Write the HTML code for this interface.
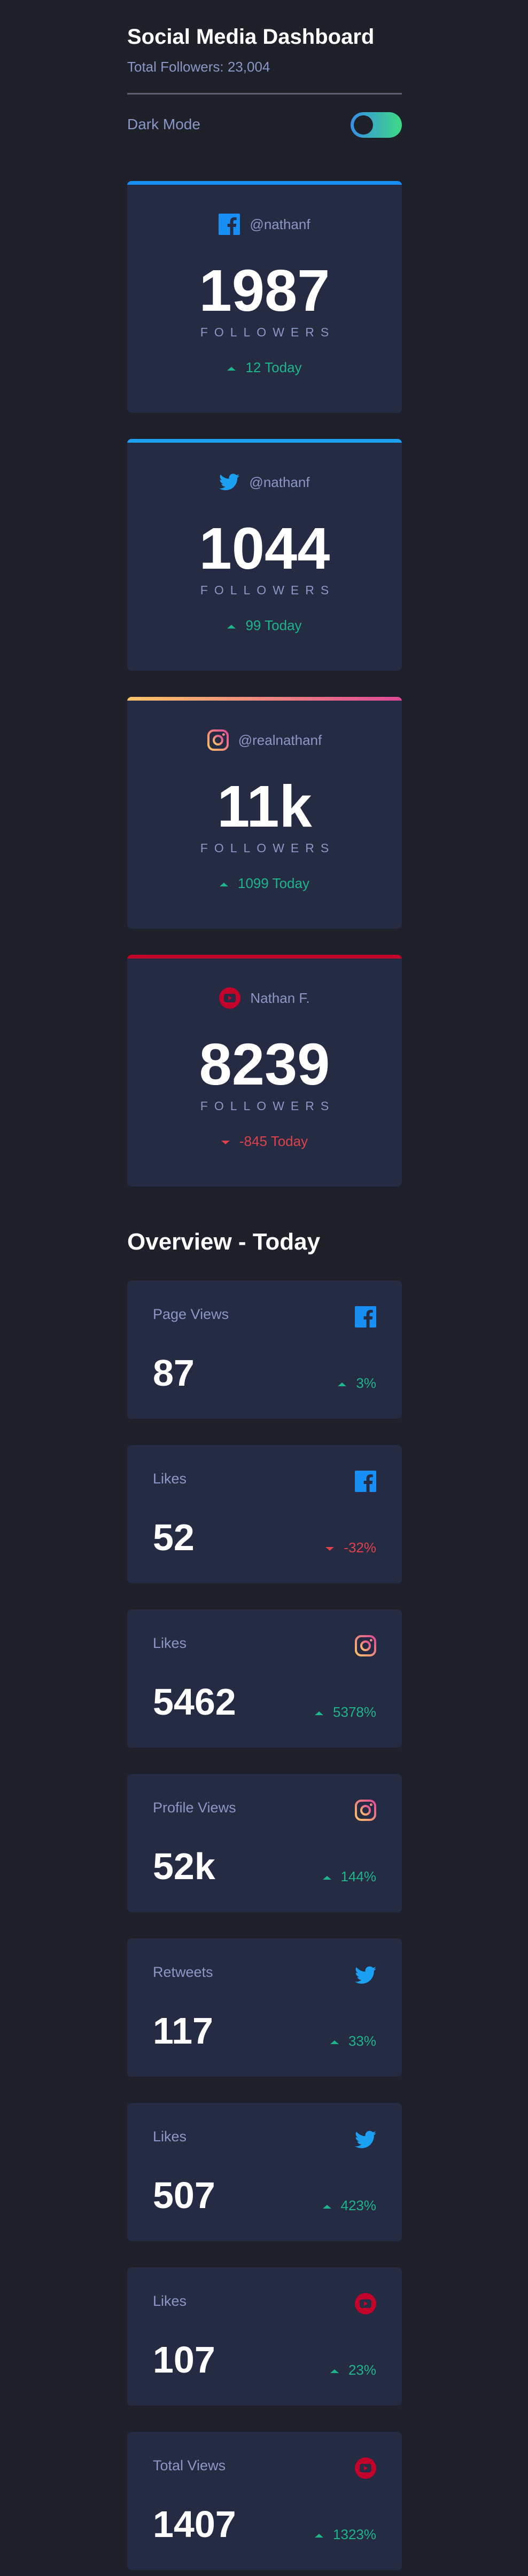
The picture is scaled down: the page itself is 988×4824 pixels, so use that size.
<!DOCTYPE html>
<html><head><meta charset="utf-8"><style>
*{margin:0;padding:0;box-sizing:border-box}
body{width:988px;height:4824px;background:#1e202a;font-family:"Liberation Sans",Arial,sans-serif;position:relative;overflow:hidden}
.a{position:absolute;line-height:1;white-space:nowrap}
.card{position:absolute;left:238px;width:514px;height:434px;background:#252b42;border-radius:8px;overflow:hidden}
.bar{position:absolute;left:0;top:0;width:100%;height:7px}
.c{position:absolute;left:0;width:100%;text-align:center;line-height:1;white-space:nowrap}
.handle{top:69px;font-size:26px;color:#8b97c6;display:flex;justify-content:center;align-items:center;gap:18px;height:24px}
.handle svg{flex:none}
.num{top:151px;font-size:110px;font-weight:bold;color:#fff}
.fol{top:272px;font-size:23px;color:#8b97c6;letter-spacing:12px;padding-left:12px}
.today{top:336px;font-size:26px}
.up{color:#1eb589}.dn{color:#dc414c}
.tri{display:inline-block;width:0;height:0;border-left:8px solid transparent;border-right:8px solid transparent;vertical-align:middle;margin-right:18px}
.tu{border-bottom:7px solid #1eb589}.td{border-top:7px solid #dc414c}
.ov{position:absolute;left:238px;width:514px;height:259px;background:#252b42;border-radius:8px}
.lbl{position:absolute;left:48px;top:50px;font-size:27px;color:#8b97c6;line-height:1}
.ico{position:absolute;right:48px;top:48px}
.onum{position:absolute;left:48px;top:138px;font-size:70px;font-weight:bold;color:#fff;line-height:1}
.pct{position:absolute;right:48px;top:179px;font-size:26px;line-height:1}
</style></head><body>
<svg width="0" height="0" style="position:absolute"><defs>
<linearGradient id="ig" x1="0" y1="1" x2="1" y2="0"><stop offset="0" stop-color="#fdc468"/><stop offset="1" stop-color="#df4996"/></linearGradient>
<symbol id="fb" viewBox="0 0 40 40"><rect width="40" height="40" rx="2" fill="#178ff5"/><path d="M27.5 40V25h5l.8-6h-5.8v-3.8c0-1.7.5-2.9 3-2.9h3.1V7.2c-.5-.1-2.4-.2-4.5-.2-4.5 0-7.5 2.7-7.5 7.7V19h-5v6h5v15z" fill="#252b42"/></symbol>
<symbol id="tw" viewBox="0 0 24 20"><path fill="#1ca0f2" d="M24 2.4c-.9.4-1.8.6-2.8.8 1-.6 1.8-1.6 2.2-2.700-1 .6-2 1-3.1 1.2C19.3.6 18 0 16.6 0c-2.7 0-4.9 2.2-4.9 4.9 0 .4 0 .8.1 1.1C7.7 5.8 4.1 3.9 1.7.9c-.4.7-.7 1.6-.7 2.5 0 1.7.9 3.2 2.2 4.1-.8 0-1.6-.2-2.2-.6v.1c0 2.4 1.7 4.4 3.9 4.8-.4.1-.8.2-1.3.2-.3 0-.6 0-.9-.1.6 2 2.4 3.4 4.6 3.4-1.7 1.300-3.8 2.100-6.100 2.100-.4 0-.8 0-1.2-.1 2.2 1.4 4.8 2.2 7.5 2.2 9.1 0 14-7.5 14-14v-.6c1-.7 1.8-1.6 2.5-2.5z"/></symbol>
<symbol id="igi" viewBox="0 0 40 40"><rect x="2" y="2" width="36" height="36" rx="10" fill="none" stroke="url(#ig)" stroke-width="4"/><circle cx="20" cy="20" r="8" fill="none" stroke="url(#ig)" stroke-width="4"/><circle cx="30.5" cy="9.5" r="2.5" fill="url(#ig)"/></symbol>
<symbol id="yt" viewBox="0 0 40 40"><circle cx="20" cy="20" r="20" fill="#c4032a"/><rect x="9" y="12" width="22" height="16" rx="4" fill="#252b42"/><path d="M17 15.5v9l7-4.5z" fill="#c4032a"/></symbol>
</defs></svg>

<div class="a" style="left:238px;top:49px;font-size:40px;font-weight:bold;color:#fff">Social Media Dashboard</div>
<div class="a" style="left:238px;top:112px;font-size:26px;color:#8b97c6">Total Followers: 23,004</div>
<div class="a" style="left:238px;top:174px;width:514px;height:3px;background:#5b5f74"></div>
<div class="a" style="left:238px;top:219px;font-size:28px;color:#8b97c6">Dark Mode</div>
<div class="a" style="left:656px;top:210px;width:96px;height:48px;border-radius:24px;background:linear-gradient(90deg,#378fe6,#3eda82)"><div style="position:absolute;left:6px;top:6px;width:36px;height:36px;border-radius:50%;background:#1e202a"></div></div>

<div class="card" style="top:339px"><div class="bar" style="background:#178ff5"></div>
<div class="c handle"><svg width="40" height="40"><use href="#fb"/></svg>@nathanf</div>
<div class="c num">1987</div><div class="c fol">FOLLOWERS</div>
<div class="c today up"><span class="tri tu"></span>12 Today</div></div>

<div class="card" style="top:822px"><div class="bar" style="background:#1ca0f2"></div>
<div class="c handle"><svg width="38" height="32" viewBox="0 0 24 20"><use href="#tw"/></svg>@nathanf</div>
<div class="c num">1044</div><div class="c fol">FOLLOWERS</div>
<div class="c today up"><span class="tri tu"></span>99 Today</div></div>

<div class="card" style="top:1305px"><div class="bar" style="background:linear-gradient(90deg,#fdc468,#df4996)"></div>
<div class="c handle"><svg width="40" height="40"><use href="#igi"/></svg>@realnathanf</div>
<div class="c num">11k</div><div class="c fol">FOLLOWERS</div>
<div class="c today up"><span class="tri tu"></span>1099 Today</div></div>

<div class="card" style="top:1788px"><div class="bar" style="background:#c4032a"></div>
<div class="c handle"><svg width="40" height="40"><use href="#yt"/></svg>Nathan F.</div>
<div class="c num">8239</div><div class="c fol">FOLLOWERS</div>
<div class="c today dn"><span class="tri td"></span>-845 Today</div></div>

<div class="a" style="left:238px;top:2304px;font-size:44px;font-weight:bold;color:#fff">Overview - Today</div>

<div class="ov" style="top:2398px"><div class="lbl">Page Views</div><svg class="ico" width="40" height="40"><use href="#fb"/></svg><div class="onum">87</div><div class="pct up"><span class="tri tu"></span>3%</div></div>
<div class="ov" style="top:2706px"><div class="lbl">Likes</div><svg class="ico" width="40" height="40"><use href="#fb"/></svg><div class="onum">52</div><div class="pct dn"><span class="tri td"></span>-32%</div></div>
<div class="ov" style="top:3014px"><div class="lbl">Likes</div><svg class="ico" width="40" height="40"><use href="#igi"/></svg><div class="onum">5462</div><div class="pct up"><span class="tri tu"></span>5378%</div></div>
<div class="ov" style="top:3322px"><div class="lbl">Profile Views</div><svg class="ico" width="40" height="40"><use href="#igi"/></svg><div class="onum">52k</div><div class="pct up"><span class="tri tu"></span>144%</div></div>
<div class="ov" style="top:3630px"><div class="lbl">Retweets</div><svg class="ico" width="40" height="34" viewBox="0 0 24 20" style="top:52px"><use href="#tw"/></svg><div class="onum">117</div><div class="pct up"><span class="tri tu"></span>33%</div></div>
<div class="ov" style="top:3938px"><div class="lbl">Likes</div><svg class="ico" width="40" height="34" viewBox="0 0 24 20" style="top:52px"><use href="#tw"/></svg><div class="onum">507</div><div class="pct up"><span class="tri tu"></span>423%</div></div>
<div class="ov" style="top:4246px"><div class="lbl">Likes</div><svg class="ico" width="40" height="40"><use href="#yt"/></svg><div class="onum">107</div><div class="pct up"><span class="tri tu"></span>23%</div></div>
<div class="ov" style="top:4554px"><div class="lbl">Total Views</div><svg class="ico" width="40" height="40"><use href="#yt"/></svg><div class="onum">1407</div><div class="pct up"><span class="tri tu"></span>1323%</div></div>
</body></html>
